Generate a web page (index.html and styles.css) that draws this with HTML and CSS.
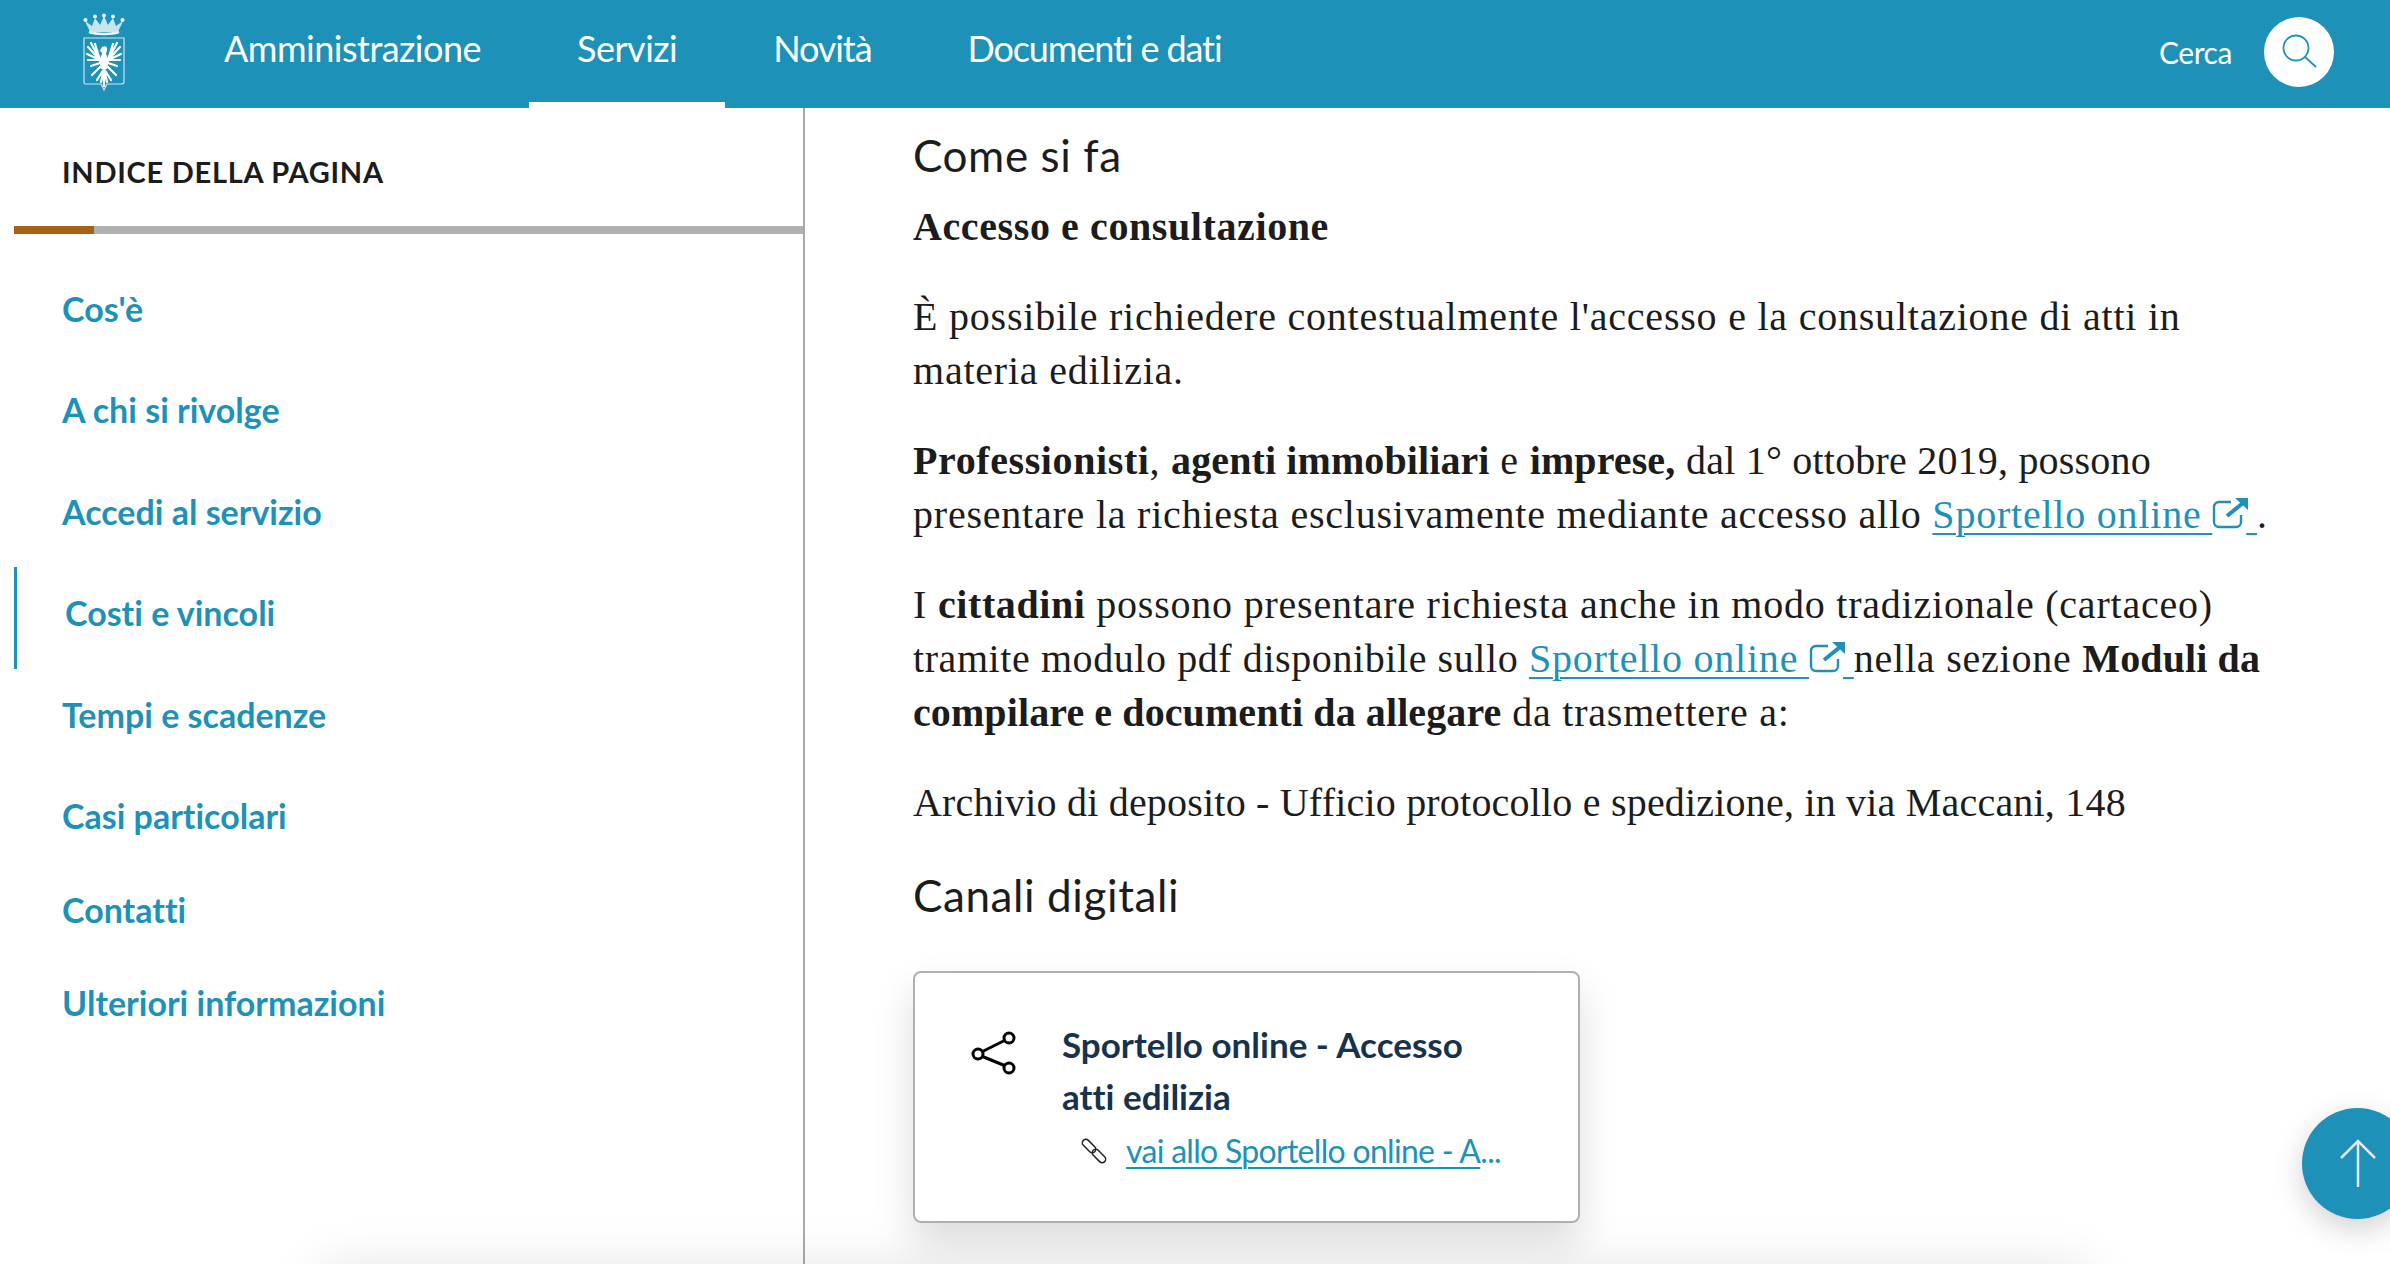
FILE: index.html
```html
<!DOCTYPE html>
<html lang="it">
<head>
<meta charset="utf-8">
<title>Come si fa</title>
<link rel="stylesheet" href="styles.css">
</head>
<body>
<header class="topbar">
  <a class="logo" href="#">
    <svg width="42" height="78" viewBox="0 0 42 78" fill="none">
      <path d="M2 8c2 5 4 8 5 11h28c1-3 3-6 5-11l-7 5-3-8-5 7-4-9-4 9-5-7-3 8z" fill="#e6f3f7" opacity=".85"/>
      <path d="M6 19c6 2.500 24 2.500 30 0" stroke="#e6f3f7" stroke-width="2.500"/>
      <g fill="#eef7fa"><circle cx="2.500" cy="7" r="2"/><circle cx="12" cy="3.500" r="2"/><circle cx="21" cy="2.500" r="2"/><circle cx="30" cy="3.500" r="2"/><circle cx="39.500" cy="7" r="2"/></g>
      <path d="M1 25h40v44c0 2-1 2-3 2H24l-3 6-3-6H4c-2 0-3 0-3-2z" stroke="#cfe6ee" stroke-width="1.200"/>
      <g stroke="#fff" stroke-width="2.200" stroke-linecap="round">
        <path d="M17 47L5 34M17 47L8 30M17 47L12 31M17 47L4 41M17 47L5 47M17 50L8 53"/>
        <path d="M25 47L37 34M25 47L34 30M25 47L30 31M25 47L38 41M25 47L37 47M25 50L34 53"/>
        <path d="M21 56L14 67M21 56L18 69M21 56V73M21 56L24 69M21 56L28 67M17 54L9 62M25 54L33 62"/>
      </g>
      <path d="M19 34c3-2 6 0 5 3l-1 4 3 6-2 9h-6l-2-9 3-6c0-2-1-3-3-3 1 0 2-2 3-4z" fill="#fff"/>
    </svg>
  </a>
  <nav class="mainnav">
    <a class="navlink" href="#">Amministrazione</a>
    <a class="navlink active" href="#">Servizi</a>
    <a class="navlink narrow" href="#">Novità</a>
    <a class="navlink narrow" href="#">Documenti e dati</a>
  </nav>
  <div class="search">
    <span class="search-label">Cerca</span>
    <span class="search-btn">
      <svg width="40" height="40" viewBox="0 0 40 40" fill="none" stroke="#1e91b8" stroke-width="1.800"><circle cx="17" cy="16" r="12.500"/><path d="M26 25l11 10"/></svg>
    </span>
  </div>
</header>

<div class="layout">
  <aside class="toc">
    <h2 class="toc-title">INDICE DELLA PAGINA</h2>
    <div class="toc-bar"><span class="toc-progress"></span></div>
    <ul class="toc-list">
      <li class="toc-item"><a href="#">Cos'è</a></li>
      <li class="toc-item"><a href="#">A chi si rivolge</a></li>
      <li class="toc-item"><a href="#">Accedi al servizio</a></li>
      <li class="toc-item current"><a href="#">Costi e vincoli</a></li>
      <li class="toc-item"><a href="#">Tempi e scadenze</a></li>
      <li class="toc-item"><a href="#">Casi particolari</a></li>
      <li class="toc-item tail-a"><a href="#">Contatti</a></li>
      <li class="toc-item tail-b"><a href="#">Ulteriori informazioni</a></li>
    </ul>
  </aside>

  <main class="content">
    <h3 class="section-title">Come si fa</h3>
    <p class="para first"><strong class="wide">Accesso e consultazione</strong></p>
    <p class="para">È possibile richiedere contestualmente l'accesso e la consultazione di atti in<br>materia edilizia.</p>
    <p class="para"><strong class="wide">Professionisti</strong>, <strong>agenti immobiliari</strong> e <strong>imprese,</strong> <span class="tight">dal 1° ottobre 2019, possono</span><br>presentare la richiesta esclusivamente mediante accesso allo <a class="ext" href="#">Sportello online <svg class="ext-icon" width="37" height="32" viewBox="0 0 37 32" fill="none" stroke="#1e91b8" stroke-width="2.400"><path d="M19 5H7a5 5 0 0 0-5 5v15a5 5 0 0 0 5 5h17a5 5 0 0 0 5-5v-7"/><path d="M15 19L31 6" stroke-width="4"/><path d="M23 1h13v12z" fill="#1e91b8" stroke="none"/></svg> </a>.</p>
    <p class="para">I <strong class="wide">cittadini</strong> possono presentare richiesta anche in modo tradizionale (cartaceo)<br><span class="snug">tramite modulo pdf disponibile sullo</span> <a class="ext" href="#">Sportello online <svg class="ext-icon" width="37" height="32" viewBox="0 0 37 32" fill="none" stroke="#1e91b8" stroke-width="2.400"><path d="M19 5H7a5 5 0 0 0-5 5v15a5 5 0 0 0 5 5h17a5 5 0 0 0 5-5v-7"/><path d="M15 19L31 6" stroke-width="4"/><path d="M23 1h13v12z" fill="#1e91b8" stroke="none"/></svg> </a>nella sezione <strong>Moduli da<br>compilare e documenti da allegare</strong> da trasmettere a:</p>
    <p class="para"><span class="tight">Archivio di deposito - Ufficio protocollo e spedizione, in via Maccani, 148</span></p>
    <h3 class="section-title second">Canali digitali</h3>

    <article class="card">
      <svg class="share" width="46" height="44" viewBox="0 0 46 44" fill="none" stroke="#000" stroke-width="3"><circle cx="38" cy="7" r="5"/><circle cx="7" cy="23" r="5"/><circle cx="38" cy="37" r="5"/><path d="M11.500 20.500L33.500 9.500M11.500 25.500L33.500 34.500"/></svg>
      <div class="card-body">
        <h4 class="card-title">Sportello online - Accesso<br>atti edilizia</h4>
        <div class="card-link">
          <svg width="26" height="26" viewBox="0 0 26 26" fill="none" stroke="#222" stroke-width="1.500"><g transform="rotate(-45 13 13)"><rect x="9.500" y="-2" width="7" height="16" rx="3.500"/><rect x="9.500" y="12" width="7" height="16" rx="3.500"/></g></svg>
          <a href="#"><span class="u">vai allo Sportello online - A</span>...</a>
        </div>
      </div>
    </article>
  </main>
</div>

<div class="overlay">
  <div class="footer-shadow"></div>
  <a class="totop" href="#">
    <svg width="38" height="50" viewBox="0 0 38 50" fill="none" stroke="#e4e8f0" stroke-width="2.500"><path d="M19 48V2M2 19L19 2l17 17"/></svg>
  </a>
</div>
</body>
</html>
```

FILE: styles.css
```css
* { box-sizing: border-box; font-variant-ligatures: none; }
html, body { margin: 0; height: 1264px; overflow: hidden; background: #fff; }
body { position: relative; font-family: "Liberation Serif", serif; color: #1c1c1c; }
a { text-decoration: none; color: inherit; }

.topbar { height: 108px; background: #1e91b8; display: flex; align-items: stretch; color: #fff; font-family: Lato, sans-serif; }
.logo { display: flex; align-items: flex-start; margin: 13px 0 0 83px; width: 42px; }
.mainnav { display: flex; margin-left: 51px; }
.navlink { display: flex; align-items: center; padding: 3px 48px 10px; font-size: 36px; font-weight: 400; letter-spacing: -0.5px; border-bottom: 6px solid transparent; }
.navlink.narrow { letter-spacing: -1.1px; }
.navlink.active { border-bottom-color: #fff; }
.search { margin-left: auto; display: flex; align-items: center; padding: 0 56px 4px 0; }
.search-label { font-size: 30px; font-weight: 400; letter-spacing: -0.4px; margin-right: 32px; }
.search-btn { width: 70px; height: 70px; border-radius: 50%; background: #fff; display: flex; align-items: center; justify-content: center; }

.layout { display: flex; height: 1156px; }
.toc { width: 805px; flex: none; border-right: 2px solid #a9a9a9; padding-left: 14px; }
.toc-title { margin: 47px 0 0 48px; font: 700 29px/34px Lato, sans-serif; font-variant-ligatures: none; letter-spacing: 0.74px; color: #1c1c1c; height: 71px; }
.toc-bar { height: 8px; background: #b0b0b0; }
.toc-progress { display: block; width: 80px; height: 8px; background: #a66116; }
.toc-list { list-style: none; margin: 24px 0 0; padding: 0; font: 700 34px/40px Lato, sans-serif; color: #1e91b8; }
.toc-item { height: 101.500px; display: flex; align-items: center; padding-left: 48px; }
.toc-item.current { border-left: 3px solid #1e91b8; margin: 4.500px 0 -4.500px; padding-bottom: 9px; }
.toc-item.tail-a { height: 86px; }
.toc-item.tail-b { height: 100px; }

.content { flex: 1; padding: 17px 0 0 108px; position: relative; }
.section-title { margin: 0; font: 400 44px/60px Lato, sans-serif; font-variant-ligatures: none; color: #1c1c1c; letter-spacing: 0.6px; }
.section-title.second { margin-top: -1px; }
.para { margin: 0 0 36px; font-size: 40px; line-height: 54px; letter-spacing: 0.78px; white-space: nowrap; }
.para.first { margin-top: 15px; }
.para strong { font-weight: 700; letter-spacing: 0.1px; }
.para strong.wide { letter-spacing: 0.6px; }
.tight { letter-spacing: 0.2px; }
.snug { letter-spacing: 0.58px; }
.ext { color: #1e91b8; text-decoration: underline; text-decoration-thickness: 2px; text-underline-offset: 5px; }
.ext-icon { vertical-align: -1px; margin: 0 -3px 0 0; }

.card { margin-top: 46px; width: 667px; height: 252px; background: #fff; border: 2px solid #b0b0b0; border-radius: 8px; box-shadow: 0 20px 40px rgba(0,0,0,.14); display: flex; padding: 58px 0 0 56px; }
.share { flex: none; }
.card-body { margin-left: 45px; }
.card-title { margin: -13px 0 0; font: 700 35px/52px Lato, sans-serif; font-variant-ligatures: none; color: #17324d; }
.card-link { display: flex; align-items: center; margin: 9px 0 0 19px; gap: 19px; font: 400 32px/40px Lato, sans-serif; font-variant-ligatures: none; color: #1e91b8; letter-spacing: -0.7px; white-space: nowrap; }
.u { text-decoration: underline; text-decoration-thickness: 2px; text-underline-offset: 4px; }

.overlay { position: absolute; inset: 0; overflow: hidden; }
.footer-shadow { position: absolute; left: 320px; right: 300px; top: 1264px; height: 60px; box-shadow: 0 0 50px rgba(0,0,0,.1); }
.totop { position: absolute; left: 2302px; top: 1108px; width: 111px; height: 111px; border-radius: 50%; background: #1e91b8; display: flex; align-items: center; justify-content: center; box-shadow: 0 10px 30px rgba(0,0,0,.18); }
```
